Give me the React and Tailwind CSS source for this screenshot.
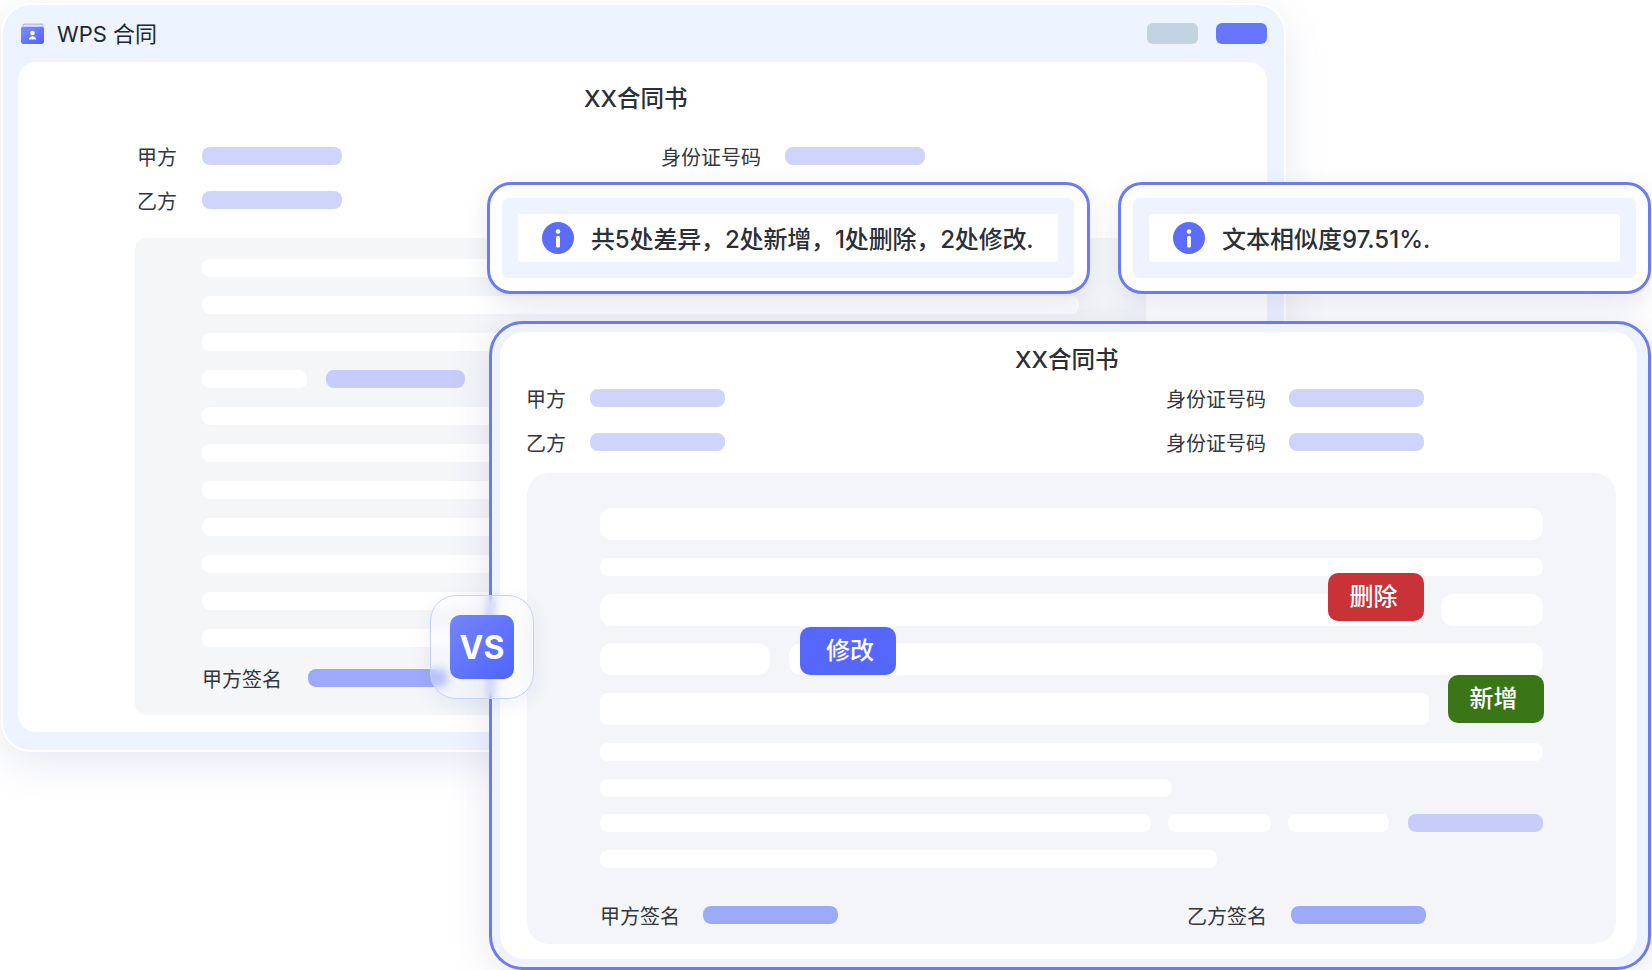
import React from "react";

// placeholder rows inside the grey contract sheet
const backRows = [0, 1, 2, "pair", 4, 5, 6, 7, 8, 9, 10];

function Field({ label, labelWidth, barClass = "w-[140px]" }) {
  return (
    <div className="flex h-[18px] items-center">
      <span className="pt-[3px] text-[20px] leading-[18px] text-[#33373d] whitespace-nowrap" style={{ width: labelWidth }}>
        {label}
      </span>
      <div className={`h-[18px] rounded-[8px] bg-[#cfd4fb] ${barClass}`} />
    </div>
  );
}

function Seg({ className = "" }) {
  return <div className={`rounded-[8px] bg-white ${className}`} />;
}

function InfoIcon() {
  return (
    <svg width="32" height="32" viewBox="0 0 32 32" className="shrink-0">
      <circle cx="16" cy="16" r="16" fill="#5a6dfb" />
      <circle cx="16" cy="9.5" r="2.3" fill="#fff" />
      <rect x="14" y="14" width="4" height="11.5" rx="1.6" fill="#fff" />
    </svg>
  );
}

function FolderIcon() {
  return (
    <svg width="23" height="21" viewBox="0 0 23 21" className="shrink-0">
      <defs>
        <linearGradient id="fold" x1="0" y1="0" x2="1" y2="1">
          <stop offset="0" stopColor="#7f8dfc" />
          <stop offset="1" stopColor="#4f62fb" />
        </linearGradient>
      </defs>
      <path d="M1.5 2.5C1.5 1.2 2.5 .5 3.6 .5H21c.8 0 1.4.7 1.4 1.5v2H1.5z" fill="#aab5fc" />
      <path d="M3 1.8h18.6v2.6H2.2z" fill="#e7ebff" />
      <path d="M0 5.4C0 4.4.8 3.8 1.8 3.8h19.4c1 0 1.8.7 1.8 1.7v13.2c0 1.2-1 2.2-2.2 2.2H2.2C1 20.9 0 19.9 0 18.7z" fill="url(#fold)" />
      <circle cx="11.5" cy="10" r="2.3" fill="#fff" />
      <path d="M7.9 16.6c0-2 1.6-3.3 3.6-3.3s3.6 1.3 3.6 3.3z" fill="#fff" />
    </svg>
  );
}

function InfoBox({ className, textClass = "", text }) {
  return (
    <div className={`absolute top-[182px] h-[112px] rounded-[24px] border-[3px] border-[#6c7cf0] bg-white px-3 py-[13px] shadow-[0_8px_24px_rgba(60,70,130,0.12)] ${className}`}>
      <div className="h-full rounded-[6px] bg-[#eef3ff] p-4">
        <div className="flex h-full items-center gap-[17px] rounded-[4px] bg-white pl-6">
          <InfoIcon />
          <span className={`mt-[3px] whitespace-nowrap text-[24px] font-medium leading-none text-[#2b2f36] ${textClass}`}>{text}</span>
        </div>
      </div>
    </div>
  );
}

function Tag({ className, children }) {
  return (
    <div className={`absolute flex h-12 w-24 items-center justify-center rounded-[10px] text-[24px] font-medium text-white ${className}`}>
      {children}
    </div>
  );
}

export default function App() {
  return (
    <div className="relative h-[970px] w-[1652px] overflow-hidden bg-white font-['Inter','Noto_Sans_CJK_SC',sans-serif]">
      {/* 后面的窗口 */}
      <div className="ml-px mt-[3px] flex h-[749px] w-[1285px] flex-col rounded-[30px] border-2 border-white bg-[#edf3ff] pb-[18px] pl-[15px] pr-[17px] shadow-[0_12px_40px_rgba(90,105,180,0.14)]">
        <div className="flex h-[57px] shrink-0 items-center pl-[3px]">
          <FolderIcon />
          <span className="ml-[13px] text-[22px] leading-none text-[#22262d]">WPS 合同</span>
          <div className="ml-auto h-[21px] w-[51px] rounded-[6px] bg-[#c3d3e2]" />
          <div className="ml-[18px] h-[21px] w-[51px] rounded-[6px] bg-[#6776fb]" />
        </div>

        <div className="flex-1 rounded-[18px] bg-white">
          <div className="ml-[566px] mt-[21px] h-8 text-[23.5px] font-medium leading-8 text-[#2b2f36]">XX合同书</div>
          <div className="ml-[119px] mt-[32px] flex items-start">
            <div className="flex w-[524px] flex-col gap-[26px]">
              <Field label="甲方" labelWidth={65} />
              <Field label="乙方" labelWidth={65} />
            </div>
            <Field label="身份证号码" labelWidth={124} />
          </div>

          <div className="ml-[117px] mt-[29px] h-[477px] w-[1011px] rounded-[12px] bg-[#f4f6f8] pl-[67px] pt-[21px]">
            <div className="flex w-[877px] flex-col gap-[19px]">
              {backRows.map((r, i) =>
                r === "pair" ? (
                  <div key={i} className="flex gap-[19px]">
                    <Seg className="h-[18px] w-[105px]" />
                    <div className="h-[18px] w-[139px] rounded-[8px] bg-[#c7cdf8]" />
                  </div>
                ) : (
                  <Seg key={i} className="h-[18px]" />
                )
              )}
            </div>
            <div className="mt-[22px] flex h-[18px] items-center">
              <span className="w-[106px] pt-[3px] text-[20px] leading-[18px] text-[#33373d]">甲方签名</span>
              <div className="h-[18px] w-[140px] rounded-[8px] bg-[#9da9f9]" />
            </div>
          </div>
        </div>
      </div>

      {/* 提示框 */}
      <InfoBox className="left-[487px] w-[603px] pr-[13px]" textClass="tracking-[-0.15px]" text="共5处差异，2处新增，1处删除，2处修改." />
      <InfoBox className="left-[1118px] w-[533px]" text="文本相似度97.51%." />

      {/* 前面的窗口 */}
      <div className="absolute left-[489px] top-[321px] h-[649px] w-[1162px] rounded-[34px] border-[3px] border-[#6c7cf0] bg-[#eef3ff] pb-2 pl-2 pr-[11px] pt-2 shadow-[0_4px_40px_rgba(70,80,140,0.14)]">
        <div className="h-full rounded-[24px] bg-white">
          <div className="ml-[515px] h-8 pt-3 text-[23.5px] font-medium leading-8 text-[#2b2f36]">XX合同书</div>
          <div className="ml-[26px] mt-[25px] flex items-start">
            <div className="flex w-[640px] flex-col gap-[26px]">
              <Field label="甲方" labelWidth={64} barClass="w-[135px]" />
              <Field label="乙方" labelWidth={64} barClass="w-[135px]" />
            </div>
            <div className="flex flex-col gap-[26px]">
              <Field label="身份证号码" labelWidth={123} barClass="w-[135px]" />
              <Field label="身份证号码" labelWidth={123} barClass="w-[135px]" />
            </div>
          </div>

          <div className="relative ml-[27px] mt-[22px] h-[471px] w-[1089px] rounded-[22px] bg-[#f3f5f8] pl-[73px] pt-[35px]">
            <div className="flex w-[943px] flex-col gap-[17.75px]">
              <Seg className="h-8 rounded-[12px]" />
              <Seg className="h-[18px]" />
              <div className="flex gap-[21px]">
                <Seg className="h-8 flex-1 rounded-[12px]" />
                <Seg className="h-8 w-[102px] rounded-[12px]" />
              </div>
              <div className="flex gap-[19px]">
                <Seg className="h-8 w-[170px] rounded-[12px]" />
                <Seg className="h-8 flex-1 rounded-[12px]" />
              </div>
              <Seg className="h-8 w-[829px] rounded-[8px]" />
              <Seg className="h-[18px]" />
              <Seg className="h-[18px] w-[572px]" />
              <div className="flex gap-[17px]">
                <Seg className="h-[18px] w-[551px]" />
                <Seg className="h-[18px] w-[103px]" />
                <Seg className="h-[18px] w-[101px]" />
                <div className="ml-0.5 h-[18px] flex-1 rounded-[8px] bg-[#c7cdf8]" />
              </div>
              <Seg className="h-[18px] w-[617px]" />
            </div>
            <div className="mt-[38px] flex h-[18px] items-center">
              <span className="w-[103px] pt-[3px] text-[20px] leading-[18px] text-[#33373d]">甲方签名</span>
              <div className="h-[18px] w-[135px] rounded-[8px] bg-[#9da9f9]" />
              <span className="ml-[349px] w-[104px] pt-[3px] text-[20px] leading-[18px] text-[#33373d]">乙方签名</span>
              <div className="h-[18px] w-[135px] rounded-[8px] bg-[#9da9f9]" />
            </div>

            <Tag className="left-[273px] top-[154px] bg-[#5567fd] pl-1">修改</Tag>
            <Tag className="left-[801px] top-[100px] bg-[#c93236] pr-[5px]">删除</Tag>
            <Tag className="left-[921px] top-[202px] bg-[#3a7518] pr-[5px]">新增</Tag>
          </div>
        </div>
      </div>

      {/* VS 玻璃角标 */}
      <div className="absolute left-[430px] top-[595px] flex h-[104px] w-[104px] items-center justify-center rounded-[26px] border border-[#c5d2f8] bg-[#f4f6ff]/30 shadow-[0_6px_18px_rgba(90,105,180,0.1)] backdrop-blur-[4px]">
        <div className="flex h-16 w-16 items-center justify-center rounded-[10px] bg-gradient-to-br from-[#7585fb] to-[#5063fb] pt-0.5 text-[32px] font-bold leading-none text-white">
          VS
        </div>
      </div>
    </div>
  );
}
